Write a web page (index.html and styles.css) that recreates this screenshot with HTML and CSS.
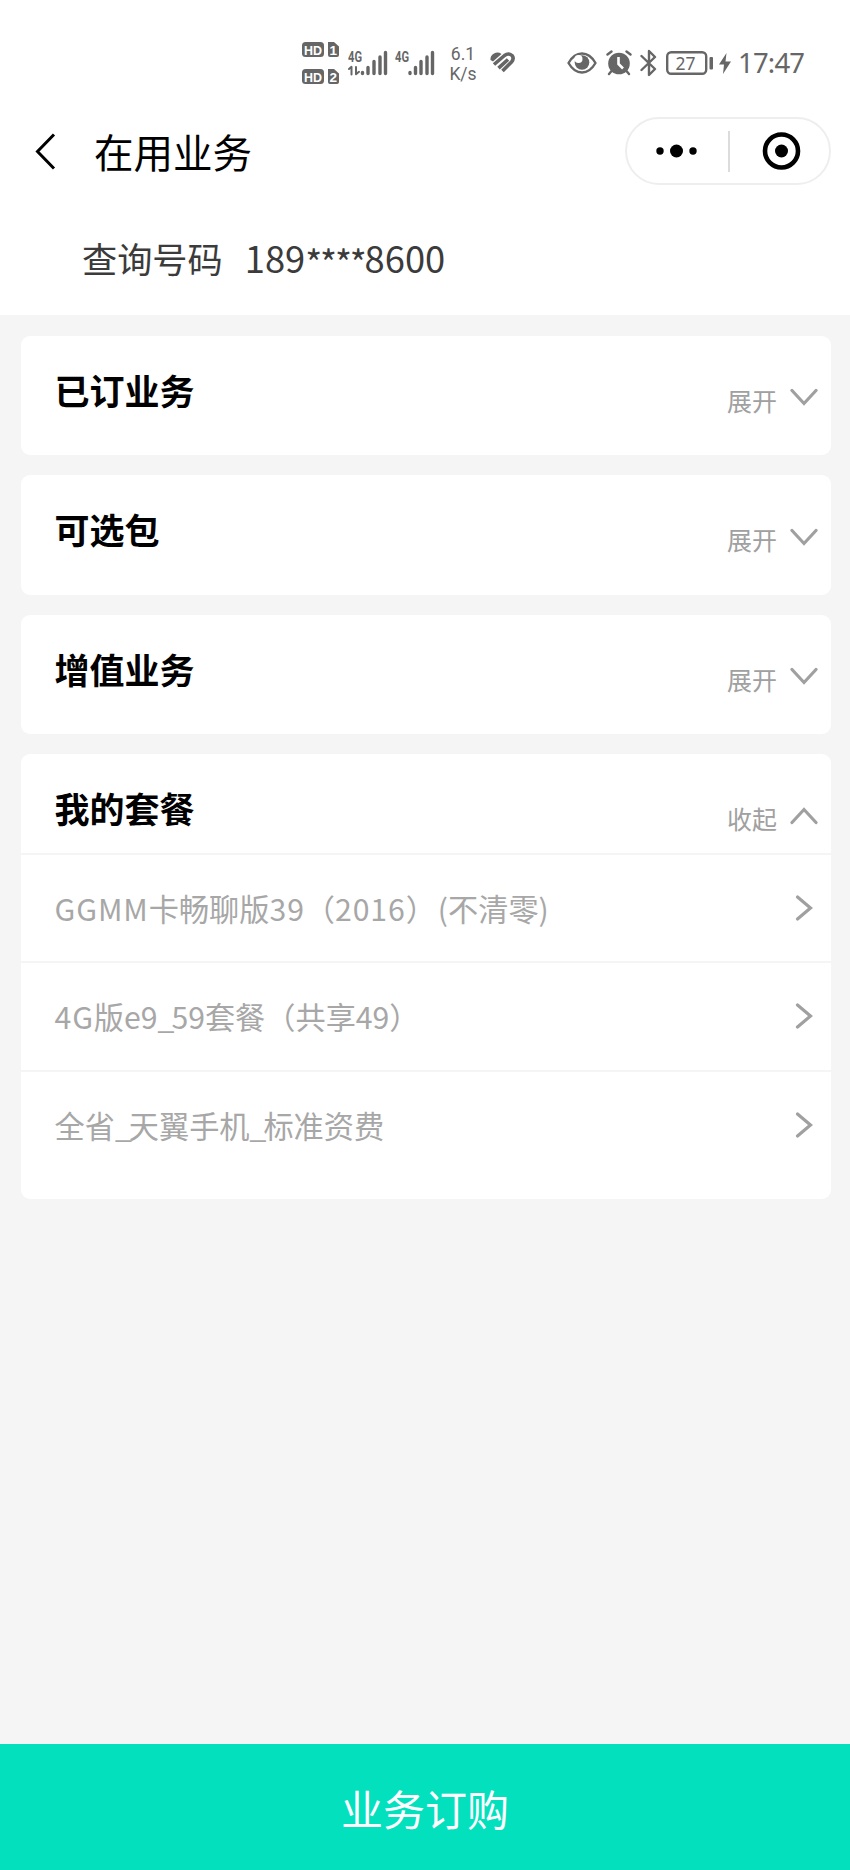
FILE: index.html
```html
<!DOCTYPE html>
<html lang="zh-CN">
<head>
<meta charset="utf-8">
<title>在用业务</title>
<link rel="stylesheet" href="styles.css">
</head>
<body>
<div class="page">
  <header class="top">
    <div class="status">
      <svg class="ico hd" width="38" height="46" viewBox="0 0 38 46">
        <rect x="0" y="2" width="22" height="15" rx="3.5"/>
        <path d="M26 2h6l5 4.500v8.500q0 2-2 2h-7q-2 0-2-2z"/>
        <rect x="0" y="29" width="22" height="15" rx="3.5"/>
        <path d="M26 29h6l5 4.500v8.500q0 2-2 2h-7q-2 0-2-2z"/>
        <g class="cut">
          <text x="2" y="14.500" textLength="18" lengthAdjust="spacingAndGlyphs">HD</text><text x="27.500" y="14.500">1</text>
          <text x="2" y="41.500" textLength="18" lengthAdjust="spacingAndGlyphs">HD</text><text x="27.500" y="41.500">2</text>
        </g>
      </svg>
      <svg class="ico sig1" width="41" height="46" viewBox="0 0 41 46">
        <text class="net" x="0" y="22" textLength="14" lengthAdjust="spacingAndGlyphs">4G</text>
        <path class="ln thin" d="M1 29l2.500-2.200V34.500M8 27v7.300l3-2.500"/>
        <path class="ln bar" d="M14.500 32.500v1M20 27.500v6M26 21.500v12M32 17v16.500M37.500 12.500v21"/>
      </svg>
      <svg class="ico sig2" width="41" height="46" viewBox="0 0 41 46">
        <text class="net" x="0" y="22" textLength="14" lengthAdjust="spacingAndGlyphs">4G</text>
        <path class="ln bar" d="M15 32.500v1M20.500 27.500v6M26 21.500v12M32 17v16.500M37.500 12.500v21"/>
      </svg>
      <div class="speed"><span>6.1</span><span>K/s</span></div>
      <svg class="ico heart" width="26" height="46" viewBox="0 0 26 46">
        <path d="M0.500 20Q0 15.500 4 13.500Q8 11.500 11.500 14L3 21.500z"/>
        <path class="ln health" d="M4 24.500L14.500 15.500Q18.500 12.500 22 15.500Q24.500 18.500 21.500 22L12.500 31M8.500 28.200L18 19.500"/>
      </svg>
      <svg class="ico eye" width="30" height="46" viewBox="0 0 30 46">
        <path class="ln mid" d="M1.500 23Q7 13.500 15 13.500T28.500 23Q23 32.500 15 32.500T1.500 23z"/>
        <circle cx="15" cy="22.500" r="7.300"/>
        <circle class="glint" cx="11.500" cy="19" r="4"/>
      </svg>
      <svg class="ico alarm" width="26" height="46" viewBox="0 0 26 46">
        <circle cx="13" cy="23.500" r="10.800"/>
        <path class="ln mid" d="M1.500 14.500l4-3M24.500 14.500l-4-3M5.500 31l-2.500 3M20.500 31l2.500 3"/>
        <path class="hand" d="M12.500 17v7l4.500 4.500"/>
      </svg>
      <svg class="ico bt" width="17" height="46" viewBox="0 0 17 46">
        <path class="ln mid" d="M1.500 16L15 29l-6 6V11l6 6L1.500 30"/>
      </svg>
      <svg class="ico batt" width="48" height="46" viewBox="0 0 48 46">
        <rect class="ln mid" x="1.200" y="12.200" width="39" height="21.600" rx="4"/>
        <rect x="43.500" y="17" width="3.500" height="12.500" rx="1"/>
        <text class="pct" x="9.500" y="30" textLength="20" lengthAdjust="spacingAndGlyphs">27</text>
      </svg>
      <svg class="ico bolt" width="12" height="46" viewBox="0 0 12 46">
        <path d="M7.500 13L0 24.500h5L4 34l8-12.500H6.500z"/>
      </svg>
      <span class="clock">17:47</span>
    </div>
    <nav class="nav">
      <svg class="back" width="22" height="40" viewBox="0 0 22 40"><path d="M19 3.500L2.500 20.500L19 37.500"/></svg>
      <h1 class="title">在用业务</h1>
      <div class="capsule">
        <svg width="101" height="64" viewBox="0 1 101 64"><circle cx="33" cy="33" r="3.700"/><circle cx="49.500" cy="33" r="6.500"/><circle cx="66" cy="33" r="3.700"/></svg>
        <span class="split"></span>
        <svg width="99" height="64" viewBox="0 1 99 64"><circle class="ring" cx="51.500" cy="33" r="16.500"/><circle cx="51.500" cy="33" r="6.500"/></svg>
      </div>
    </nav>
    <div class="query"><span>查询号码</span><span class="num">189<span class="mask">****</span>8600</span></div>
  </header>
  <main class="list">
    <section class="card">
      <div class="head"><h2>已订业务</h2><span class="toggle">展开</span><svg class="chev" width="28" height="20" viewBox="0 0 28 20"><path d="M2 3.500L14 16.500L26 3.500"/></svg></div>
    </section>
    <section class="card">
      <div class="head"><h2>可选包</h2><span class="toggle">展开</span><svg class="chev" width="28" height="20" viewBox="0 0 28 20"><path d="M2 3.500L14 16.500L26 3.500"/></svg></div>
    </section>
    <section class="card">
      <div class="head"><h2>增值业务</h2><span class="toggle">展开</span><svg class="chev" width="28" height="20" viewBox="0 0 28 20"><path d="M2 3.500L14 16.500L26 3.500"/></svg></div>
    </section>
    <section class="card open">
      <div class="head"><h2>我的套餐</h2><span class="toggle">收起</span><svg class="chev" width="28" height="20" viewBox="0 0 28 20"><path d="M2 16.500L14 3.500L26 16.500"/></svg></div>
      <div class="row"><span><span class="wide">GGMM</span>卡畅聊版<span class="wide">39</span>（<span class="wide">2016</span>）<span class="tail">(不清零)</span></span><svg class="chev" width="18" height="28" viewBox="0 0 18 28"><path d="M2.500 3L15.500 14L2.500 25"/></svg></div>
      <div class="row"><span><span class="wide">4G</span>版e9<span class="under">_</span>59套餐（共享49）</span><svg class="chev" width="18" height="28" viewBox="0 0 18 28"><path d="M2.500 3L15.500 14L2.500 25"/></svg></div>
      <div class="row"><span>全省<span class="under">_</span>天翼手机<span class="under">_</span>标准资费</span><svg class="chev" width="18" height="28" viewBox="0 0 18 28"><path d="M2.500 3L15.500 14L2.500 25"/></svg></div>
    </section>
  </main>
  <button class="order">业务订购</button>
</div>
</body>
</html>
```
FILE: styles.css
```css
* { box-sizing: border-box; }
body { margin: 0; font-family: "Noto Sans CJK SC", sans-serif; background: #f5f5f5; }
h1, h2 { margin: 0; }
svg { display: block; flex: none; }
.page { display: flex; flex-direction: column; width: 850px; height: 1870px; overflow: hidden; }

.top { height: 315px; background: #fff; }
.status { display: flex; height: 86px; padding: 40px 0 0 302px; color: #666; }
.ico { fill: #666; }
.cut text { fill: #fff; font: bold 13.5px "Liberation Sans", sans-serif; }
.ln { fill: none; stroke: #666; stroke-linecap: round; stroke-linejoin: round; }
.thin { stroke-width: 2; }
.mid { stroke-width: 2.4; }
.bar { stroke-width: 3.4; }
.health { stroke-width: 3.6; stroke-linecap: butt; }
.hand { fill: none; stroke: #fff; stroke-width: 2.6; }
.glint { fill: #fff; }
.net { font: bold 15px Roboto, sans-serif; }
.pct { font: 18.5px "Noto Sans", sans-serif; }
.sig1 { margin-left: 8px; }
.sig2 { margin-left: 6px; }
.speed { display: flex; flex-direction: column; align-items: center; width: 30px; margin-left: 12px; padding-top: 4px; font: 17.5px/20px Roboto, sans-serif; }
.heart { margin-left: 12px; }
.eye { margin-left: 51px; }
.alarm { margin-left: 9px; }
.bt { margin-left: 8px; }
.batt { margin-left: 9px; }
.bolt { margin-left: 5px; }
.clock { margin-left: 7px; font: 27.5px/46px "Noto Sans", sans-serif; letter-spacing: -0.8px; }

.nav { display: flex; align-items: center; height: 130px; padding: 0 19px 0 35px; }
.back { fill: none; stroke: #000; stroke-width: 3; }
.title { margin-left: 37px; font-size: 39.5px; font-weight: 400; line-height: 60px; color: #000; }
.capsule { display: flex; align-items: center; width: 206px; height: 68px; margin-left: auto; border: 2px solid #eee; border-radius: 34px; }
.split { flex: none; width: 2px; height: 41px; background: #dcdcdc; }
.ring { fill: none; stroke: #000; stroke-width: 4.600; }
.query { display: flex; align-items: center; padding-left: 82px; height: 84px; font-size: 35.2px; color: #3b3b3b; }
.query > span { margin-top: -2px; }
.query .num { margin-left: 22px; font-size: 36.300px; }
.mask { letter-spacing: -2.100px; vertical-align: -4px; line-height: 0; }

.list { flex: 1; display: flex; flex-direction: column; gap: 20px; padding: 20.500px 19px 0 21px; }
.card { height: 119.500px; background: #fff; border-radius: 9px; }
.open { height: 444.500px; }
.head { display: flex; height: 99px; padding: 0 13px 0 33.500px; }
h2 { flex: 1; padding-top: 28px; font-size: 35px; font-weight: 700; line-height: 52px; color: #000; }
.toggle { padding-top: 45px; font-size: 25px; line-height: 38px; color: #a0a0a0; }
.chev { fill: none; stroke: #a0a0a0; stroke-width: 3.200; stroke-linecap: round; }
.head .chev { margin: 51.500px 0 0 13px; }
.row { display: flex; align-items: center; justify-content: space-between; height: 108.300px; padding: 0 18px 0 33.500px; border-top: 2px solid #f5f5f5; font-size: 30.200px; color: #a7a7a7; }
.wide { letter-spacing: 0.900px; }
.tail { margin-left: 2px; }
.under { letter-spacing: -3px; }

.order { height: 126px; border: 0; padding: 0; background: #02e0be; color: #fff; font: 42px "Noto Sans CJK SC", sans-serif; }
```
